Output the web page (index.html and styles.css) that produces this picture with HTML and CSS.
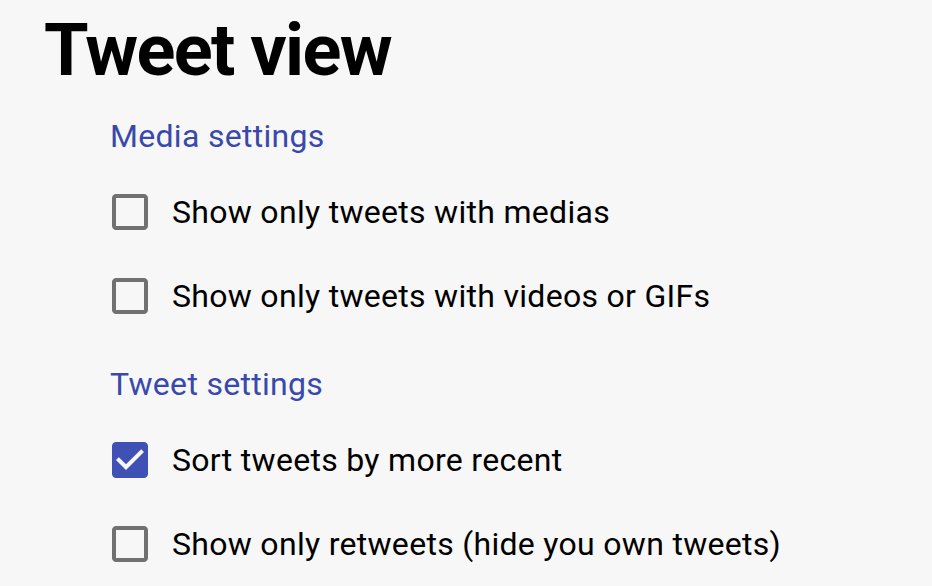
FILE: index.html
```html
<!DOCTYPE html>
<html lang="en">
<head>
<meta charset="utf-8">
<title>Tweet view</title>
<link rel="stylesheet" href="styles.css">
</head>
<body>
<main class="page">
  <h1 class="title">Tweet view</h1>
  <section class="group">
    <h2 class="group-title">Media settings</h2>
    <label class="option">
      <span class="checkbox"><svg viewBox="0 0 24 24"><path d="M19 5v14H5V5h14m0-2H5c-1.11 0-2 .9-2 2v14c0 1.1.89 2 2 2h14c1.1 0 2-.9 2-2V5c0-1.1-.9-2-2-2z"/></svg></span>
      <span class="label">Show only tweets with medias</span>
    </label>
    <label class="option">
      <span class="checkbox"><svg viewBox="0 0 24 24"><path d="M19 5v14H5V5h14m0-2H5c-1.11 0-2 .9-2 2v14c0 1.1.89 2 2 2h14c1.1 0 2-.9 2-2V5c0-1.1-.9-2-2-2z"/></svg></span>
      <span class="label">Show only tweets with videos or GIFs</span>
    </label>
  </section>
  <section class="group group-second">
    <h2 class="group-title">Tweet settings</h2>
    <label class="option">
      <span class="checkbox checked"><svg viewBox="0 0 24 24"><path d="M19 3H5c-1.11 0-2 .9-2 2v14c0 1.1.89 2 2 2h14c1.1 0 2-.9 2-2V5c0-1.1-.9-2-2-2zm-9 14l-5-5 1.410-1.41L10 14.17l7.59-7.59L19 8l-9 9z"/></svg></span>
      <span class="label">Sort tweets by more recent</span>
    </label>
    <label class="option">
      <span class="checkbox"><svg viewBox="0 0 24 24"><path d="M19 5v14H5V5h14m0-2H5c-1.11 0-2 .9-2 2v14c0 1.1.89 2 2 2h14c1.1 0 2-.9 2-2V5c0-1.1-.9-2-2-2z"/></svg></span>
      <span class="label">Show only retweets (hide you own tweets)</span>
    </label>
  </section>
</main>
</body>
</html>
```

FILE: styles.css
```css
html, body {
  margin: 0;
  padding: 0;
  background: #f7f7f7;
}

body {
  font-family: Roboto, "Liberation Sans", sans-serif;
  color: rgba(0, 0, 0, 0.87);
  overflow: hidden;
}

.page {
  display: flex;
  flex-direction: column;
}

.title {
  margin: 8px 0 0 44px;
  font-size: 72px;
  font-weight: 700;
  line-height: 86px;
  letter-spacing: -1.6px;
  color: #000;
}

.group {
  display: flex;
  flex-direction: column;
  padding-left: 110px;
  margin-top: 18px;
}

.group-second {
  margin-top: 22px;
}

.group-title {
  margin: 0 0 10px;
  font-size: 32px;
  font-weight: 400;
  line-height: 48px;
  letter-spacing: 0.3px;
  color: #3949ab;
}

.option {
  display: flex;
  align-items: center;
  height: 84px;
  margin-left: -22px;
  cursor: pointer;
}

.checkbox {
  display: flex;
  padding: 18px;
}

.checkbox svg {
  width: 48px;
  height: 48px;
  fill: rgba(0, 0, 0, 0.54);
}

.checkbox.checked svg {
  fill: #3f51b5;
}

.label {
  font-size: 32px;
  line-height: 48px;
  letter-spacing: 0.3px;
  color: #000;
}
```
